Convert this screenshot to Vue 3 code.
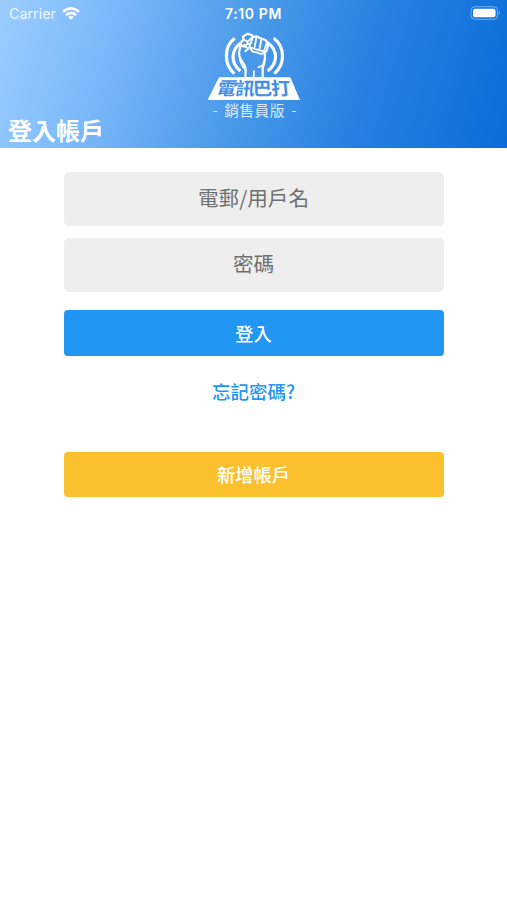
<script setup>
import { ref } from 'vue'

const user = ref('')
const password = ref('')
</script>

<template>
  <main class="screen">
    <header class="header">
      <div class="status">
        <div class="carrier">
          <span>Carrier</span>
          <svg class="wifi" viewBox="0 0 18 13" width="18" height="13" fill="none" stroke="#fff" stroke-width="2.6">
            <path d="M1 4.8Q9-2.2 17 4.8" />
            <path d="M4 8Q9 3.7 14 8" />
            <path d="M6.3 9.9Q9 7.8 11.7 9.9L9 12.7Z" fill="#fff" stroke="none" />
          </svg>
        </div>
        <time class="clock">7:10 PM</time>
        <svg class="battery" viewBox="0 0 31 14" width="31" height="14">
          <rect x="1" y=".7" width="26.5" height="12.6" rx="3.8" fill="none" stroke="#fff" stroke-opacity=".42" />
          <rect x="3" y="2.7" width="22.5" height="8.6" rx="2" fill="#fff" />
          <path d="M28.8 4.8Q31 7 28.8 9.2Z" fill="#fff" fill-opacity=".5" />
        </svg>
      </div>
      <svg class="logo" viewBox="0 9 360 276" width="120" height="92">
        <g fill="none" stroke="#fff" stroke-width="9.5">
          <path d="M119 40C86 66 86 118 118 146" />
          <path d="M138 53C106 76 107 115 136 138" stroke-width="9.5" />
          <path d="M236 40C271 66 271 118 238 146" />
          <path d="M218 53C250 76 249 115 218 138" stroke-width="9.5" />
        </g>
        <path
          d="M151 159L152 137Q152 125 146 116L136 101Q131 91 133 78L138 56Q139 47 146 45L144 35L158 26L171 31L174 36L184 34L197 40L211 45L220 55L216 75L209 85L210 98Q208 111 203 122L203 159Z"
          fill="#4b97ea" stroke="#fff" stroke-width="6.5" stroke-linejoin="round"
        />
        <g fill="none" stroke="#fff" stroke-width="5.5" stroke-linejoin="round" stroke-linecap="round">
          <path d="M147 45L158 50L171 38M158 50L157 58L140 63M157 58L167 55L174 36" />
          <path d="M167 55L163 67L178 71L184 38M178 71L193 76L199 43M193 76L207 79L215 54" />
          <path d="M140 63L154 66L159 73L151 79M163 67L173 80L185 82L197 87L209 84" />
          <path d="M201 122L190 127M177 138L176 157M134 104L143 124L151 133M211 101L207 120L203 132" stroke-width="5" />
        </g>
        <path d="M72 157H286L315 225H38Z" fill="#fff" />
        <g class="brand" font-size="54">
          <text transform="translate(61 211) skewX(-17) scale(1.08 1)">電</text>
          <text transform="translate(119 211) skewX(-7) scale(1.08 1)">訊</text>
          <text transform="translate(174 211) skewX(2) scale(1.08 1)">巴</text>
          <text transform="translate(230 211) skewX(6) scale(1.08 1)">打</text>
        </g>
        <text class="edition" y="272" x="53 70 88 133 178.500 224 270 289">- 銷售員版 -</text>
      </svg>
      <h1 class="title">登入帳戶</h1>
    </header>

    <form class="form" @submit.prevent>
      <input v-model="user" class="field" type="text" placeholder="電郵/用戶名" />
      <input v-model="password" class="field" type="password" placeholder="密碼" />
      <button class="button login" type="submit">登入</button>
      <a class="forgot">忘記密碼?</a>
      <button class="button register" type="button">新增帳戶</button>
    </form>
  </main>
</template>

<style>
body {
  margin: 0;
  background: #fff;
}
</style>

<style scoped>
.screen {
  min-height: 900px;
  background: #fff;
  font-family: Inter, "Noto Sans CJK TC", sans-serif;
}
.header {
  box-sizing: border-box;
  height: 147.5px;
  display: flex;
  flex-direction: column;
  color: #fff;
  background: linear-gradient(106.3deg, #9bccff 0%, #7dbafa 20%, #4f9deb 45%, #2580e0 72%, #0a6cda 100%);
}
.status {
  height: 28px;
  display: grid;
  grid-template-columns: 1fr auto 1fr;
  align-items: center;
  padding: 0 6px 2px;
  box-sizing: border-box;
}
.carrier {
  display: flex;
  align-items: center;
  gap: 6px;
  padding-left: 3px;
  font-size: 14.3px;
  color: rgba(255, 255, 255, .88);
}
.clock {
  font-size: 14px;
  font-weight: 600;
  letter-spacing: .6px;
}
.battery {
  justify-self: end;
}
.logo {
  display: block;
  flex: none;
  margin-left: 195px;
}
.brand {
  font-family: "Noto Sans CJK TC", sans-serif;
  font-weight: 700;
  fill: #438fe6;
}
.edition {
  font-family: "Noto Sans CJK TC", sans-serif;
  font-size: 44px;
  font-weight: 400;
  fill: #d9eafc;
}
.title {
  margin: -2px 0 0 8px;
  font: 700 24px/23px "Noto Sans CJK TC", sans-serif;
}
.form {
  display: flex;
  flex-direction: column;
  width: 380px;
  margin: 0 auto;
  padding-top: 24.5px;
}
.field {
  box-sizing: border-box;
  width: 100%;
  height: 53.5px;
  margin: 0 0 12.5px;
  padding: 0 0 3px;
  border: 0;
  border-radius: 5px;
  background: #eee;
  color: #333;
  text-align: center;
  font: 400 20.6px "Noto Sans CJK TC", sans-serif;
  outline: none;
}
.field::placeholder {
  color: #707070;
  opacity: 1;
}
.button {
  height: 45.5px;
  padding: 0;
  border: 0;
  border-radius: 4px;
  color: #fff;
  font: 500 18.2px "Noto Sans CJK TC", sans-serif;
}
.login {
  margin-top: 6px;
  background: #2196f3;
}
.forgot {
  margin: 21.5px 0 45.5px;
  text-align: center;
  color: #2196f3;
  font: 500 18.500px/29px "Noto Sans CJK TC", sans-serif;
}
.register {
  background: #fbc02d;
}
</style>
